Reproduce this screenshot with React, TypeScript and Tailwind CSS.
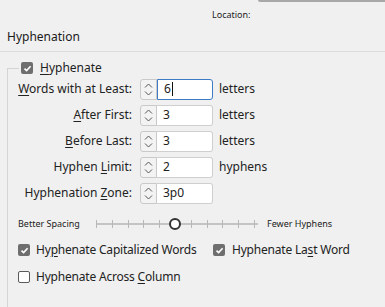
import React from "react";

const font = { fontFamily: '"Noto Sans", "Open Sans", sans-serif' };

function U({ children }: { children: React.ReactNode }) {
  return <span className="underline underline-offset-[2px] decoration-[1px]">{children}</span>;
}

function Check({ checked }: { checked: boolean }) {
  return checked ? (
    <span className="flex h-[12px] w-[12px] shrink-0 items-center justify-center rounded-[2px] bg-[#6e6e6e]">
      <svg width="9" height="9" viewBox="0 0 9 9">
        <path d="M1.5 4.6 L3.6 6.6 L7.6 2.2" fill="none" stroke="#fff" strokeWidth="1.6" />
      </svg>
    </span>
  ) : (
    <span className="h-[12px] w-[12px] shrink-0 rounded-[2px] border border-[#5a5a5a] bg-white" />
  );
}

function Spin({ value, focused }: { value: string; focused?: boolean }) {
  return (
    <div className="flex h-[21px]">
      <div className="flex w-[17px] flex-col items-center justify-center gap-[3px] rounded-l-[3px] border border-[#c9c9c9] bg-[#f3f3f3]">
        <svg width="9" height="5" viewBox="0 0 9 5">
          <path d="M1 4.5 L4.5 1 L8 4.5" fill="none" stroke="#555" strokeWidth="1" />
        </svg>
        <svg width="9" height="5" viewBox="0 0 9 5">
          <path d="M1 0.5 L4.5 4 L8 0.5" fill="none" stroke="#555" strokeWidth="1" />
        </svg>
      </div>
      <div
        className={
          focused
            ? "flex w-[56px] items-center rounded-r-[3px] border border-[#3d7cc4] bg-white pl-[6px] text-[12px] text-[#222]"
            : "flex w-[56px] items-center rounded-r-[3px] border border-l-0 border-[#cfcfcf] bg-white pl-[6px] text-[12px] text-[#222]"
        }
      >
        {value}
        {focused ? <span className="ml-[1px] h-[14px] w-[1px] bg-[#111]" /> : null}
      </div>
    </div>
  );
}

function Row({ label, value, unit, focused }: { label: React.ReactNode; value: string; unit?: string; focused?: boolean }) {
  return (
    <div className="flex h-[26px] items-center">
      <div className="w-[124px] text-right text-[12px] text-[#222]">{label}</div>
      <div className="ml-[8px]">
        <Spin value={value} focused={focused} />
      </div>
      {unit ? <div className="ml-[6px] text-[12px] text-[#222]">{unit}</div> : null}
    </div>
  );
}

export default function App() {
  const ticks = [96, 112, 128, 143, 159, 191, 207, 222, 238, 254];
  return (
    <div className="relative h-[307px] w-[385px] overflow-hidden bg-[#f0f0f0]" style={font}>
      <div className="flex justify-end">
        <div className="h-[2px] w-[127px] rounded-bl-[2px] bg-[#a8a8a8]" />
      </div>
      <div className="pl-[212px] pt-[7px] text-[9px] leading-[12px] text-[#222]">Location:</div>
      <div className="pl-[7px] pt-[8px] text-[12px] leading-[16px] text-[#1a1a1a]">Hyphenation</div>
      <div className="mt-[6px] h-[1px] bg-[#dcdcdc]" />

      <div className="mt-[8px] flex h-[16px] items-center">
        <div className="ml-[7px] h-[8px] w-[12px] self-end border-l border-t border-[#d4d4d4]" />
        <div className="ml-[2px] flex items-center gap-[7px]">
          <Check checked />
          <span className="text-[12px] leading-[16px] text-[#222]">
            <U>H</U>yphenate
          </span>
        </div>
      </div>

      <div className="ml-[7px] h-[240px] border-l border-[#d4d4d4]">
        <Row label={<><U>W</U>ords with at Least:</>} value="6" unit="letters" focused />
        <Row label={<><U>A</U>fter First:</>} value="3" unit="letters" />
        <Row label={<><U>B</U>efore Last:</>} value="3" unit="letters" />
        <Row label={<>Hyphen <U>L</U>imit:</>} value="2" unit="hyphens" />
        <Row label={<>Hyphenation <U>Z</U>one:</>} value="3p0" />

        <div className="mt-[10px] flex h-[16px] items-center pl-[10px]">
          <span className="w-[78px] text-[9px] text-[#222]">Better Spacing</span>
          <div className="relative h-[16px] w-[162px]">
            <div className="absolute left-0 right-0 top-[7px] h-[2px] bg-[#c4c4c4]" />
            {ticks.map((t) => (
              <div key={t} className="absolute top-[4px] h-[8px] w-[1px] bg-[#b8b8b8]" style={{ left: t - 96 }} />
            ))}
            <div className="absolute left-[73px] top-[2px] h-[12px] w-[12px] rounded-full border-2 border-[#333] bg-white" />
          </div>
          <span className="ml-[9px] text-[9px] text-[#222]">Fewer Hyphens</span>
        </div>

        <div className="mt-[8px] flex h-[20px] items-center pl-[10px] text-[12px] text-[#222]">
          <div className="flex w-[195px] items-center">
            <Check checked />
            <span className="ml-[6px] tracking-[-0.2px]">
              Hy<U>p</U>henate Capitalized Words
            </span>
          </div>
          <Check checked />
          <span className="ml-[7px] tracking-[-0.2px]">
            Hyphenate La<U>s</U>t Word
          </span>
        </div>
        <div className="mt-[7px] flex h-[20px] items-center pl-[10px] text-[12px] text-[#222]">
          <Check checked={false} />
          <span className="ml-[6px] tracking-[-0.2px]">
            Hyphenate Across <U>C</U>olumn
          </span>
        </div>
      </div>
    </div>
  );
}
